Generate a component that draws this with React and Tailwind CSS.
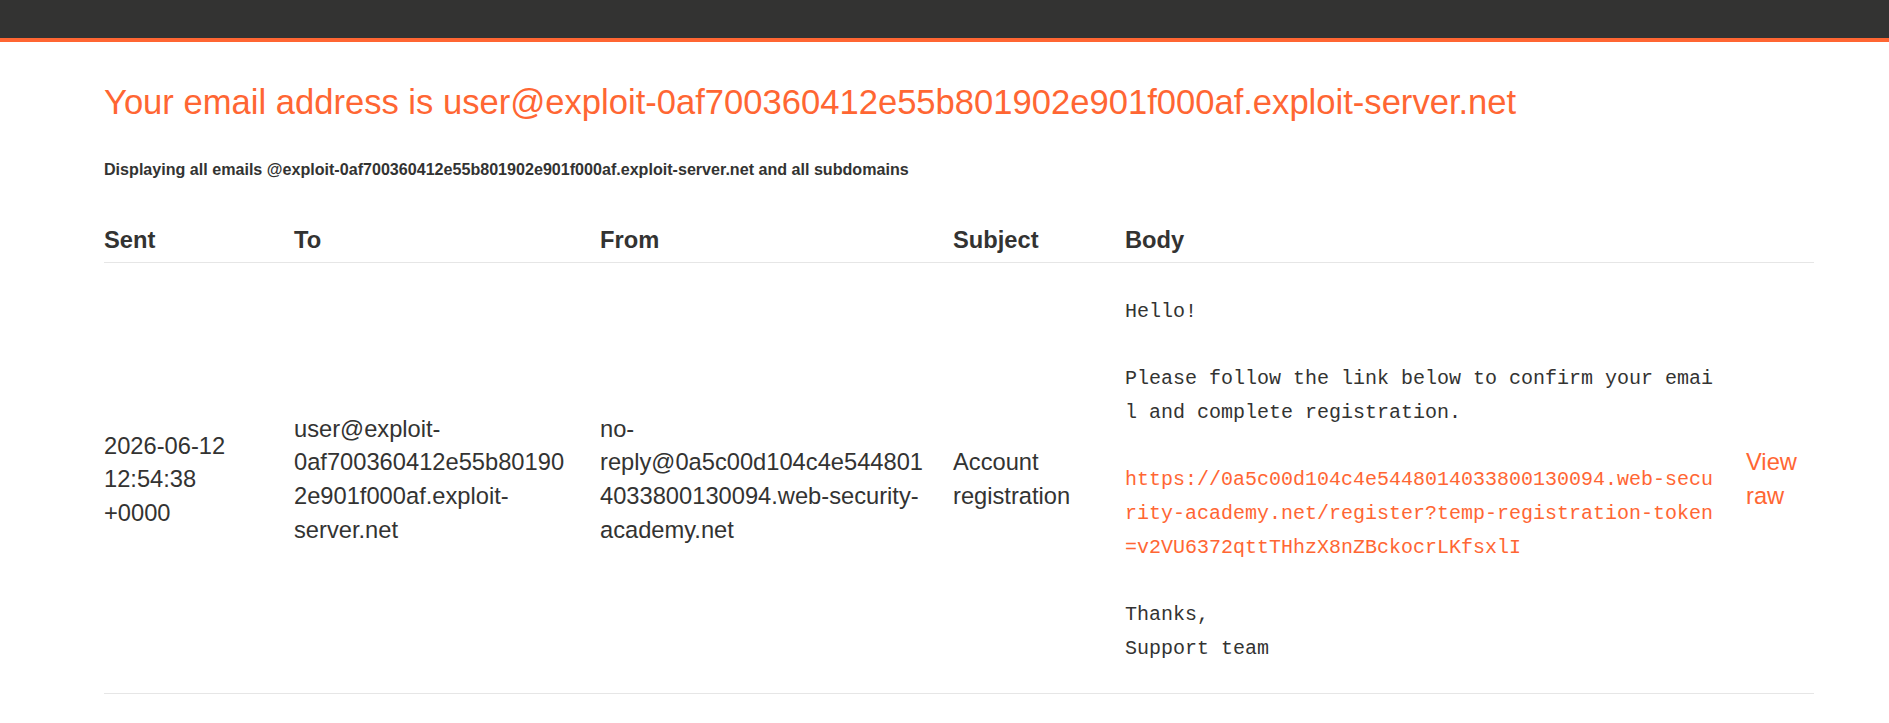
import React from 'react';

const emailAddress = 'user@exploit-0af700360412e55b801902e901f000af.exploit-server.net';
const domain = 'exploit-0af700360412e55b801902e901f000af.exploit-server.net';

const emails = [
  {
    id: 1,
    sent: '2026-06-12 12:54:38 +0000',
    to: emailAddress,
    from: 'no-reply@0a5c00d104c4e5448014033800130094.web-security-academy.net',
    subject: 'Account registration',
    link: 'https://0a5c00d104c4e5448014033800130094.web-security-academy.net/register?temp-registration-token=v2VU6372qttTHhzX8nZBckocrLKfsxlI',
  },
];

const App = () => {
  return (
    <div className="min-h-screen bg-white text-[#333332] font-['Liberation_Sans',Arial,sans-serif]">
      {/* top bar */}
      <div className="h-[42px] bg-[#333332] border-b-4 border-[#ff6633]"></div>

      <div className="pl-[104px] pr-[75px]">
        <h1 className="mt-[40px] text-[34.6px] leading-[40px] font-normal text-[#ff6633]">
          Your email address is {emailAddress}
        </h1>
        <h4 className="mt-[37px] text-[16.1px] leading-[20px] font-bold">
          Displaying all emails @{domain} and all subdomains
        </h4>

        <table className="mt-[45px] w-[1710px] table-fixed border-collapse text-left text-[23.7px] leading-[33.6px]">
          <colgroup>
            <col className="w-[190px]" />
            <col className="w-[306px]" />
            <col className="w-[353px]" />
            <col className="w-[172px]" />
            <col className="w-[621px]" />
            <col className="w-[68px]" />
          </colgroup>
          <thead>
            <tr className="border-b border-[#e6e6e6]">
              <th className="pb-[4px] font-bold">Sent</th>
              <th className="pb-[4px] font-bold">To</th>
              <th className="pb-[4px] font-bold">From</th>
              <th className="pb-[4px] font-bold">Subject</th>
              <th className="pb-[4px] font-bold">Body</th>
              <th className="pb-[4px]"></th>
            </tr>
          </thead>
          <tbody>
            {emails.map((mail) => (
              <tr key={mail.id} className="border-b border-[#e6e6e6]">
                <td className="pt-[32px] pb-[28px] pr-[30px] align-middle break-words">{mail.sent}</td>
                <td className="pt-[32px] pb-[28px] pr-[26px] align-middle break-words">{mail.to}</td>
                <td className="pt-[32px] pb-[28px] pr-[24px] align-middle break-words">{mail.from}</td>
                <td className="pt-[32px] pb-[28px] pr-[24px] align-middle break-words">{mail.subject}</td>
                <td className="pt-[32px] pb-[28px] align-middle">
                  <pre className="w-[594px] whitespace-pre-wrap break-all font-['Liberation_Mono','Courier_New',monospace] text-[20px] leading-[33.7px]">
                    {'Hello!\n\nPlease follow the link below to confirm your email and complete registration.\n\n'}
                    <a href="#" className="text-[#ff6633]">{mail.link}</a>
                    {'\n\nThanks,\nSupport team'}
                  </pre>
                </td>
                <td className="pt-[32px] pb-[28px] align-middle">
                  <a href="#" className="text-[#ff6633]">View raw</a>
                </td>
              </tr>
            ))}
          </tbody>
        </table>
      </div>
    </div>
  );
};

export default App;
